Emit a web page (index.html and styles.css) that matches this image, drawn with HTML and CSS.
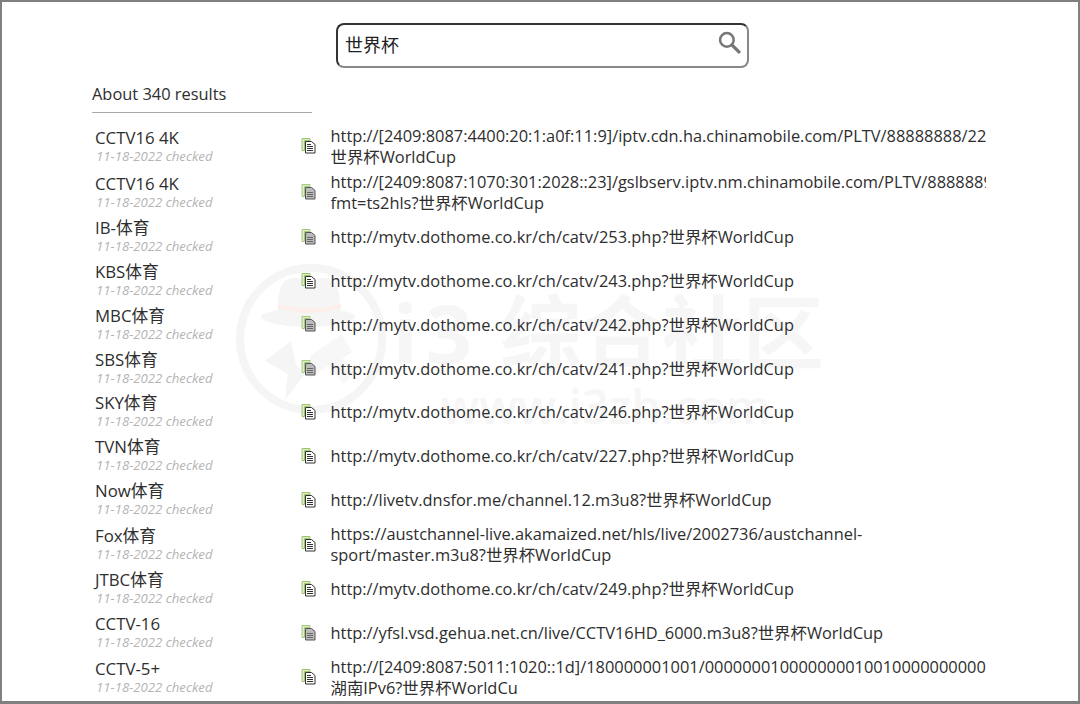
FILE: index.html
```html
<!DOCTYPE html>
<html lang="zh-Hans">
<head>
  <meta charset="UTF-8" />
  <title>世界杯</title>
  <link rel="stylesheet" href="styles.css">
</head>
<body>
  <svg width="0" height="0" class="defs">
    <symbol id="doc" viewBox="0 0 15 16">
      <path d="M1 .5h8v2H3.5v10H1z" fill="#dfeccb" stroke="#9cc46c" />
      <path d="M4.5 3.5h6l3.500 3v8.500h-9.500z" fill="#fff" stroke="#333" />
      <path d="M6 6.500h4M6 8.500h6M6 10.500h6M6 12.500h6" stroke="#333" />
    </symbol>
    <symbol id="doc-grey" viewBox="0 0 15 16">
      <path d="M1 .5h8v2H3.5v10H1z" fill="#dfeccb" stroke="#a6ca7c" />
      <path d="M4.5 3.5h6l3.500 3v8.500h-9.500z" fill="#bbb" stroke="#555" />
      <path d="M6 8.500h6M6 10.500h6M6 12.500h6" stroke="#666" />
    </symbol>
  </svg>
  <div class="frame">
    <div class="watermark" aria-hidden="true">
      <svg class="wm-logo" viewBox="0 0 150 150" width="150" height="150">
        <circle cx="75" cy="75" r="71" fill="none" stroke="#f5f5f5" stroke-width="8" />
        <path d="M42 46c0-16 2-30 14-32 7-1 11 3 17 3s10-4 17-3c12 2 14 16 14 32 9 2 15 4 15 6 0 6-21 11-47 11S25 58 25 52c0-2 8-4 17-6z" fill="#f5f5f5" />
        <path d="M42 42c20 6 44 6 63 0" fill="none" stroke="#fdeeea" stroke-width="4" />
        <path d="M29 97l26-20 5 24 9 9-20 26 3-26z" fill="#f5f5f5" />
        <path d="M74 92l32-22 10 18-10 7 14 11-12 14-16-18-18 12z" fill="#f7f7f7" />
      </svg>
      <div class="wm-text">
        <div class="wm-title"><span class="wm-i3">i3</span>综合社区</div>
        <div class="wm-url">www.i3zh.com</div>
      </div>
    </div>

    <div class="search">
      <span class="search-text">世界杯</span>
      <svg class="search-icon" viewBox="0 0 22 22" width="23" height="23">
        <circle cx="8.500" cy="8.500" r="6.500" fill="none" stroke="#777" stroke-width="2.400" />
        <path d="M13.500 13.500l6.500 6.500" stroke="#777" stroke-width="3.200" stroke-linecap="round" />
      </svg>
    </div>

    <div class="results">
      <div class="count">About 340 results</div>
      <div class="rows">
        <div class="row">
          <div class="name"><div>CCTV16 4K</div><div class="checked">11-18-2022 checked</div></div>
          <svg class="doc"><use href="#doc" /></svg>
          <div class="url">http://[2409:8087:4400:20:1:a0f:11:9]/iptv.cdn.ha.chinamobile.com/PLTV/88888888/224/3221226168/index.m3u8<br>世界杯WorldCup</div>
        </div>
        <div class="row">
          <div class="name"><div>CCTV16 4K</div><div class="checked">11-18-2022 checked</div></div>
          <svg class="doc"><use href="#doc-grey" /></svg>
          <div class="url">http://[2409:8087:1070:301:2028::23]/gslbserv.iptv.nm.chinamobile.com/PLTV/88888890/224/3221226168/index.m3u8?<br>fmt=ts2hls?世界杯WorldCup</div>
        </div>
        <div class="row">
          <div class="name"><div>IB-体育</div><div class="checked">11-18-2022 checked</div></div>
          <svg class="doc"><use href="#doc-grey" /></svg>
          <div class="url">http://mytv.dothome.co.kr/ch/catv/253.php?世界杯WorldCup</div>
        </div>
        <div class="row">
          <div class="name"><div>KBS体育</div><div class="checked">11-18-2022 checked</div></div>
          <svg class="doc"><use href="#doc" /></svg>
          <div class="url">http://mytv.dothome.co.kr/ch/catv/243.php?世界杯WorldCup</div>
        </div>
        <div class="row">
          <div class="name"><div>MBC体育</div><div class="checked">11-18-2022 checked</div></div>
          <svg class="doc"><use href="#doc-grey" /></svg>
          <div class="url">http://mytv.dothome.co.kr/ch/catv/242.php?世界杯WorldCup</div>
        </div>
        <div class="row">
          <div class="name"><div>SBS体育</div><div class="checked">11-18-2022 checked</div></div>
          <svg class="doc"><use href="#doc-grey" /></svg>
          <div class="url">http://mytv.dothome.co.kr/ch/catv/241.php?世界杯WorldCup</div>
        </div>
        <div class="row">
          <div class="name"><div>SKY体育</div><div class="checked">11-18-2022 checked</div></div>
          <svg class="doc"><use href="#doc" /></svg>
          <div class="url">http://mytv.dothome.co.kr/ch/catv/246.php?世界杯WorldCup</div>
        </div>
        <div class="row">
          <div class="name"><div>TVN体育</div><div class="checked">11-18-2022 checked</div></div>
          <svg class="doc"><use href="#doc" /></svg>
          <div class="url">http://mytv.dothome.co.kr/ch/catv/227.php?世界杯WorldCup</div>
        </div>
        <div class="row">
          <div class="name"><div>Now体育</div><div class="checked">11-18-2022 checked</div></div>
          <svg class="doc"><use href="#doc" /></svg>
          <div class="url">http://livetv.dnsfor.me/channel.12.m3u8?世界杯WorldCup</div>
        </div>
        <div class="row">
          <div class="name"><div>Fox体育</div><div class="checked">11-18-2022 checked</div></div>
          <svg class="doc"><use href="#doc" /></svg>
          <div class="url">https://austchannel-live.akamaized.net/hls/live/2002736/austchannel-<br>sport/master.m3u8?世界杯WorldCup</div>
        </div>
        <div class="row">
          <div class="name"><div>JTBC体育</div><div class="checked">11-18-2022 checked</div></div>
          <svg class="doc"><use href="#doc" /></svg>
          <div class="url">http://mytv.dothome.co.kr/ch/catv/249.php?世界杯WorldCup</div>
        </div>
        <div class="row">
          <div class="name"><div>CCTV-16</div><div class="checked">11-18-2022 checked</div></div>
          <svg class="doc"><use href="#doc-grey" /></svg>
          <div class="url">http://yfsl.vsd.gehua.net.cn/live/CCTV16HD_6000.m3u8?世界杯WorldCup</div>
        </div>
        <div class="row">
          <div class="name"><div>CCTV-5+</div><div class="checked">11-18-2022 checked</div></div>
          <svg class="doc"><use href="#doc" /></svg>
          <div class="url">http://[2409:8087:5011:1020::1d]/180000001001/00000001000000001001000000000006/index.m3u8?<br>湖南IPv6?世界杯WorldCu</div>
        </div>
      </div>
    </div>
  </div>
</body>
</html>
```

FILE: styles.css
```css
* {
  box-sizing: border-box;
  margin: 0;
  padding: 0;
}

html, body {
  height: 100%;
  overflow: hidden;
}

body {
  font-family: "Open Sans", "Noto Sans CJK SC", sans-serif;
  font-size: 16.4px;
  color: #2e2e2e;
  background-color: #fff;
}

.defs {
  position: absolute;
}

.frame {
  position: relative;
  height: 704px;
  border: 2px solid #808080;
  border-bottom-width: 3px;
  overflow: hidden;
  padding-top: 21px;
}

.watermark {
  position: absolute;
  left: 234px;
  top: 262px;
  display: flex;
  gap: 7px;
}

.wm-title {
  font-size: 81px;
  font-weight: 700;
  line-height: 90px;
  color: #f6f6f6;
  margin-top: 23px;
}

.wm-i3 {
  letter-spacing: 8px;
  margin-right: 20px;
}

.wm-url {
  font-size: 47px;
  font-weight: 600;
  line-height: 48px;
  color: #f6f6f6;
  margin: 5px 0 0 48px;
}

.search {
  position: relative;
  display: flex;
  align-items: center;
  justify-content: space-between;
  width: 413px;
  height: 45px;
  margin-left: 334px;
  padding: 0 6px 0 7px;
  border: 2px solid #333;
  border-right-color: #888;
  border-bottom-color: #888;
  border-radius: 8px;
  background-color: #fff;
  font-size: 18px;
  color: #222;
}

.search-text {
  margin-top: -3px;
}

.search-icon {
  margin-top: -7px;
}

.results {
  position: relative;
  margin: 15px 0 0 90px;
  width: 894px;
}

.count {
  width: 220px;
  height: 30px;
  line-height: 22px;
  border-bottom: 1px solid #aaa;
}

.rows {
  margin-top: 10.7px;
}

.row {
  display: flex;
  align-items: center;
  min-height: 43.8px;
  padding: 1.8px 0;
}

.name {
  width: 208.5px;
  padding-left: 3px;
  font-size: 16.8px;
  line-height: 20px;
}

.checked {
  padding-left: 1px;
  font-size: 13.2px;
  line-height: 17px;
  font-style: italic;
  color: #b4b4b4;
}

.doc {
  width: 15px;
  height: 16px;
  flex: none;
}

.url {
  flex: 1;
  margin-left: 15px;
  line-height: 21px;
  white-space: nowrap;
  overflow: hidden;
}
```
